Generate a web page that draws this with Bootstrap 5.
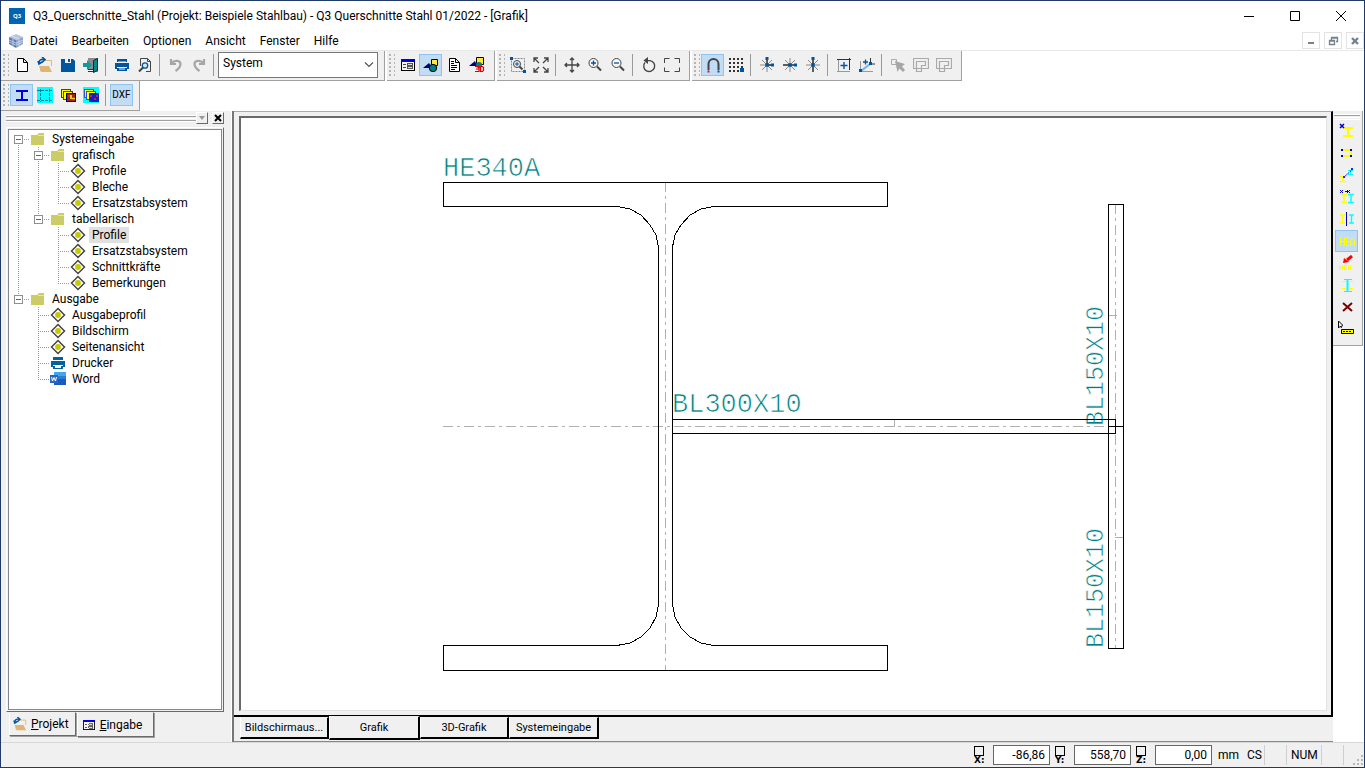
<!DOCTYPE html>
<html lang="de">
<head>
<meta charset="utf-8">
<meta name="viewport" content="width=device-width, initial-scale=1">
<title>Q3_Querschnitte_Stahl</title>
<link href="https://cdn.jsdelivr.net/npm/bootstrap@5.3.0/dist/css/bootstrap.min.css" rel="stylesheet">
<script src="https://cdn.jsdelivr.net/npm/bootstrap@5.3.0/dist/js/bootstrap.bundle.min.js"></script>
<style>
:root{--face:#f0f0f0;--shade:#a0a0a0;--dark:#696969}
body{font:12px/16px Roboto,"Open Sans",sans-serif;color:#000;background:#fff}
button{font:inherit;color:inherit;border:0;background:none;padding:0}
svg{display:block;flex:none}
.window{height:100vh;min-height:480px;border:1px solid #203a68}
.titlebar{height:30px;padding-left:8px}
.titlebar h1{font-size:12px;line-height:16px;font-weight:400;color:#000}
.winbtn{width:46px;height:30px}
.menubar{height:19px;padding-left:8px}
.menubar a{color:#000;text-decoration:none;padding:0 7px}
.mdi{width:18px;height:17px;border:1px solid #e3e3e3}
.bands{border-top:1px solid #e8e8e8;column-gap:2px}
.band{background:var(--face);border-right:1px solid var(--shade);border-bottom:1px solid var(--shade);height:30px;padding:0 6px 2px 9px;position:relative}
.band::before{content:"";position:absolute;left:2px;top:3px;bottom:3px;width:6px;background:radial-gradient(circle at 1px 1px,#b4b4b4 1px,transparent 1px) 0 0/5px 4px}
.tool{width:23px;height:22px}
.tool.active,.side .active{background:#c2dcf3;border:1px solid #8cc4f4}
.dxf{font-size:10px;line-height:20px}
.split{width:1px;height:22px;background:#999;margin:0 4px 0 3px}
.combo{width:160px;height:26px;border:1px solid #777;border-radius:0;font:12px/18px Roboto,sans-serif;color:#000;background:#fff;padding:0 0 3px 4px;appearance:none}
.combo-wrap{position:relative}
.combo-wrap svg{position:absolute;right:4px;top:9px;pointer-events:none}
.main{background:var(--face);min-height:0}
.left{width:231px;padding:1px 7px 5px 5px;border-right:1px solid #fff}
.docktitle{height:12px;margin-bottom:3px}
.rail{height:7px;border:1px solid #fff;border-width:1px 0;background:linear-gradient(var(--shade) 1px,transparent 1px 2px,#fff 2px 3px,transparent 3px 4px,var(--shade) 4px)}
.tiny{width:12px;height:12px;border:1px solid;border-color:#fff var(--dark) var(--dark) #fff}
.treeframe{border:1px solid;border-color:#fff var(--dark) var(--dark) #fff;padding:1px}
.tree{background:#fff;border:1px solid #828790;padding:1px 0 0}
.outline,.outline ul{list-style:none;margin:0;padding:0}
.outline ul{padding-left:20px}
.outline li{--v:repeating-linear-gradient(#999 0 1px,transparent 1px 2px);--h:repeating-linear-gradient(90deg,#999 0 1px,transparent 1px 2px);background:var(--v) 9px 0/1px 100% no-repeat,var(--h) 9px 8px/12px 1px no-repeat}
.outline li:last-child{background:var(--v) 9px 0/1px 8px no-repeat,var(--h) 9px 8px/12px 1px no-repeat}
.outline>li:first-child{background-position:9px 8px,9px 8px}
.node{height:16px}
.node>.fold,.node>.nofold{width:20px;height:16px;padding:0 0 0 5px}
.fold i{display:block;width:9px;height:9px;border:1px solid #8e8f8f;background:linear-gradient(#4b63a7,#4b63a7) 1px 3px/5px 1px no-repeat #fff}
.node svg{margin:0 3px 0 1px}
.node a{color:#000;text-decoration:none;padding:0 3px}
.node a.picked{background:#e0e0e0}
.docktabs{padding-left:3px}
.docktab{height:24px;padding:0 6px 0 3px;border:1px solid;border-color:transparent var(--dark) var(--dark) #fff;box-shadow:1px 1px 0 var(--shade)}
.docktab.lower{height:25px;margin-left:1px;padding:0 11px 0 4px}
.center{border-left:2px solid #777;min-width:0}
.mdiframe{border-right:2px solid #000;border-bottom:2px solid #000;border-top:1px solid #aaa;padding:4px 4px 4px 5px;min-height:0}
.canvas{border:1px solid;border-color:#696969 #e3e3e3 #e3e3e3 #696969;border-width:2px 1px 1px 2px;background:#fff;min-height:0}
.canvas svg{width:100%;height:100%}
.canvas text{font-family:"Liberation Mono",monospace;fill:#008080;stroke:#fff;stroke-width:.7px}
.sheets{height:25px;padding-left:6px;border-bottom:1px solid #888;font-size:11px}
.sheet{height:22px;border:1px solid;border-color:transparent #000 #000 #fff;border-bottom-width:2px;border-right-width:2px}
.sheet.front{height:24px;margin-top:-1px;background:var(--face)}
.right{width:31px;background:#fff}
.side{background:var(--face);width:30px;padding:3px 3px 5px 1px;border:1px solid var(--shade);border-left:0;border-top:0}
.side button{width:23px;height:22px}
.side .rail{width:26px;height:6px}
.status{height:25px;background:var(--face);border-top:1px solid #d8d8d8}
.status label{width:11px;margin:0 8px 0 5px;font:700 9px/8px "DejaVu Sans",sans-serif}
.status label span{display:block;width:10px;height:10px;border:1px solid #000}
.status input{width:57px;height:20px;border:1px solid #666;padding:0 4px 0 0;text-align:right;font:12px/16px Roboto,sans-serif;background:#fff}
.unit{width:21px;margin:0 8px 0 6px}
.cellbox{border-right:1px solid #cfcfcf;height:20px;line-height:20px}
.w-cs{width:18px}.w-gap{width:22px}.w-num{width:35px;padding-left:4px}
.px1{shape-rendering:crispEdges}
</style>
</head>
<body>
<svg width="0" height="0" class="position-absolute" aria-hidden="true">
<defs>
<symbol id="i-new" viewBox="0 0 16 16"><path d="M3.500 1.500h6l4 4v9h-10zM9.500 1.500v4h4" fill="#fff" stroke="#000"/></symbol>
<symbol id="i-open" viewBox="0 0 16 16"><path d="M8 3.500h6.500V9M3.500 9v5" fill="none" stroke="#e2b978"/><path d="M2 9h10l3 6H4z" fill="#e0b574"/><path d="M2 6c0-3 2-4 5-3.500M5 0l3 2.600L5 5.500M1 4l1 3 3-2" fill="none" stroke="#00559f" stroke-width="1.600"/></symbol>
<symbol id="i-save" viewBox="0 0 16 16"><path d="M1 2h12l2 2v11H1z" fill="#00559f"/><path d="M5 2h6v4H5z" fill="#f0f0f0"/><path d="M8 2h2v3H8z" fill="#00559f"/></symbol>
<symbol id="i-exit" viewBox="0 0 16 16"><path d="M5 1h10v14h-4v-2H5z" fill="#8c8c8c"/><path d="M10.500 3.500l4-2v12l-4 2z" fill="#008c8c" stroke="#222"/><path d="M0 6h4V3l5 5-5 5v-3H0z" fill="#129a9a"/><path d="M5 12.500h5M5 14.500h5" stroke="#333"/></symbol>
<symbol id="i-print" viewBox="0 0 16 16"><path d="M3 2h10v3H3zM1 6h14v6h-2v-2H3v2H1zM3 11h10v3H3z" fill="#00559f"/><path d="M5 11.500h6v1H5zM4 4.500h8v1H4z" fill="#f0f0f0"/></symbol>
<symbol id="i-preview" viewBox="0 0 16 16"><path d="M3.500 9V1.500h7l3 3v10H9M10.500 1.500v3h3" fill="none" stroke="#444"/><circle cx="8" cy="8.500" r="2.700" fill="#d8ebfa" stroke="#00559f" stroke-width="1.300"/><path d="M6 10.500L2 14.500" stroke="#444" stroke-width="2"/></symbol>
<symbol id="i-undo" viewBox="0 0 16 16"><path d="M3 2v5h5M3.500 6.500c3-4 9-3 9 .500 0 3-2 5-5 7" fill="none" stroke="#a6a6a6" stroke-width="2.200"/></symbol>
<symbol id="i-form" viewBox="0 0 16 16"><g class="px1"><path d="M1.500 2.500h13v11h-13z" fill="#f4f4f4" stroke="#000"/><path d="M1 2h14v3H1z" fill="#0000e0"/><path d="M3 7.500h3M3 10.500h3" stroke="#444"/><path d="M7.500 6.500h5v2h-5zM7.500 9.500h5v2h-5z" fill="#ddd" stroke="#555"/></g></symbol>
<symbol id="i-shapes" viewBox="0 0 16 16"><path d="M8.500 2.500h6v6h-6z" fill="#ffe83a" stroke="#000"/><path d="M0 11l6-5 3 5z" fill="#000080"/><circle cx="10" cy="11" r="3.700" fill="#008080" stroke="#000"/></symbol>
<symbol id="i-doc" viewBox="0 0 16 16"><path d="M3.500 1.500h6l4 4v9h-10zM9.500 1.500v4h4" fill="#fff" stroke="#000"/><path d="M5 4.500h3M5 6.500h3M5 8.500h6M5 10.500h6M5 12.500h4" stroke="#000"/></symbol>
<symbol id="i-3d" viewBox="0 0 16 16"><path d="M7.500.500h7v7h-7z" fill="#ffe83a" stroke="#000"/><path d="M0 9l6-5 2 5z" fill="#000080"/><circle cx="10" cy="8" r="3" fill="#008080"/><path d="M6 9.500h4v5H6M7 12h3M11.500 9.500h2l1 1v3l-1 1h-2z" fill="none" stroke="#e00000" stroke-width="1.200"/></symbol>
<symbol id="i-zoomwin" viewBox="0 0 16 16"><path d="M1.500 1.500h13v13h-13z" fill="none" stroke="#888" stroke-dasharray="2 1"/><path d="M0 0h3v3H0zM13 13h3v3h-3z" fill="#00559f"/><circle cx="7" cy="7" r="3.500" fill="#f0f0f0" stroke="#444"/><path d="M9.500 9.500l3 3" stroke="#444" stroke-width="2"/><path d="M5 7h4M7 5v4" stroke="#00559f"/></symbol>
<symbol id="i-expand" viewBox="0 0 16 16"><path d="M1 5V1h4M11 1h4v4M15 11v4h-4M5 15H1v-4M1 1l5 5M15 1l-5 5M15 15l-5-5M1 15l5-5" fill="none" stroke="#444" stroke-width="1.300"/></symbol>
<symbol id="i-move" viewBox="0 0 16 16"><path d="M8 1v14M1 8h14M6 3l2-2 2 2M6 13l2 2 2-2M3 6L1 8l2 2M13 6l2 2-2 2" fill="none" stroke="#444" stroke-width="1.300"/></symbol>
<symbol id="i-zin" viewBox="0 0 16 16"><circle cx="6.500" cy="6" r="4.500" fill="#f8f8f8" stroke="#444"/><path d="M10 9.500l4 4" stroke="#444" stroke-width="2"/><path d="M4 6h5M6.500 3.500v5" stroke="#00559f" stroke-width="1.300"/></symbol>
<symbol id="i-zout" viewBox="0 0 16 16"><circle cx="6.500" cy="6" r="4.500" fill="#f8f8f8" stroke="#444"/><path d="M10 9.500l4 4" stroke="#444" stroke-width="2"/><path d="M4 6h5" stroke="#00559f" stroke-width="1.300"/></symbol>
<symbol id="i-rotate" viewBox="0 0 16 16"><path d="M4 5.500A5.500 5.500 0 1 0 9 3.600H5" fill="none" stroke="#444" stroke-width="1.400"/><path d="M7 0v7L2.500 3.500z" fill="#444"/></symbol>
<symbol id="i-full" viewBox="0 0 16 16"><path d="M.500 6V1.500h5M10.500 1.500h5V6M15.500 10.500v4h-5M5.500 14.500h-5v-4" fill="none" stroke="#444"/></symbol>
<symbol id="i-magnet" viewBox="0 0 16 16"><path d="M3.500 13V7a4.500 4.500 0 0 1 10 0v6" fill="none" stroke="#444" stroke-width="2"/><path d="M2.500 13.500h2v2h-2z" fill="#c0105c"/><path d="M12.500 13.500h2v2h-2z" fill="#00559f"/></symbol>
<symbol id="i-grid" viewBox="0 0 16 16"><path d="M1 2h14M1 6h14M1 10h14M1 14h10" stroke="#333" stroke-width="2" stroke-dasharray="2 2" class="px1"/><path d="M12 11h4v4h-4z" fill="#00559f"/></symbol>
<symbol id="i-ray" viewBox="0 0 16 16"><path d="M8 1v14M1 8h14M3 3l10 10M13 3L3 13" stroke="#8a8a8a"/><path d="M6.500 6.500h3v3h-3z" fill="#00559f"/></symbol>
<symbol id="i-plusbox" viewBox="0 0 16 16"><path d="M1 14.500h13M2.500 3v11" stroke="#999"/><path d="M1 2.500h14M13.500 1v12" stroke="#333"/><path d="M8 5v7M4.500 8.500h7" stroke="#00559f" stroke-width="1.400"/></symbol>
<symbol id="i-line" viewBox="0 0 16 16"><path d="M1.500 4v10M2 14.500h12" stroke="#999"/><path d="M2 14L11 7" stroke="#73b4ea" stroke-width="2"/><path d="M11.500 1v6h5" fill="none" stroke="#333"/><path d="M4 5h5M6.500 2.500v5" stroke="#00559f" stroke-width="1.300"/><path d="M0 12h3v3H0zM10 5h3v3h-3z" fill="#00559f"/></symbol>
<symbol id="i-pick" viewBox="0 0 16 16"><path d="M1.500 2.500h5v5h-5z" fill="none" stroke="#aaa"/><path d="M5 4l10 3-3 2.500 3 3.500-2 2-3.500-3.500-2 3.500z" fill="#a6a6a6"/></symbol>
<symbol id="i-screen" viewBox="0 0 16 16"><path d="M.500 1.500h15v10h-7v3h-5v-3h-3zM3.500 4.500h9v4h-4v3h-5z" fill="none" stroke="#aaa" stroke-width="1.200"/></symbol>
<symbol id="i-beam" viewBox="0 0 16 16"><path d="M2 4h12M2 13h12" stroke="#0000e0" stroke-width="2"/><path d="M8 4v9" stroke="#0000e0" stroke-width="2"/></symbol>
<symbol id="i-beam2" viewBox="0 0 16 16"><path d="M0 0h16v16H0z" fill="#0ff"/><path d="M0 3.500h16M0 13.500h16M3.500 2v13M12.500 2v13" stroke="#008098" stroke-dasharray="3 1"/></symbol>
<symbol id="i-cards" viewBox="0 0 16 16"><g class="px1"><path d="M1.500 2.500h9v8h-9z" fill="#ff0" stroke="#443"/><path d="M3.500 4.500h9v8h-9z" fill="#ff0" stroke="#443"/><path d="M6.500 6.500h9v8h-9z" fill="#a02810" stroke="#000080"/><path d="M8 8h2v2H8zM12 10h3v3h-3z" fill="#d33b15"/><path d="M10 8h2v3h3v1h-5z" fill="#e0d020"/></g></symbol>
<symbol id="i-cards2" viewBox="0 0 16 16"><g class="px1"><path d="M0 0h16v16H0z" fill="#0ff"/><path d="M1.500 2.500h9v8h-9z" fill="#ff0" stroke="#35b"/><path d="M3.500 4.500h9v8h-9z" fill="#ff0" stroke="#35b"/><path d="M6 6h10v9H6z" fill="#1020c0"/><path d="M7 8h2v2H7zM11 11h2v2h-2zM13 8h2v2h-2z" fill="#c02060"/></g></symbol>
<symbol id="i-folder" viewBox="0 0 16 16"><path d="M1 4h6l2-2h5v12H1z" fill="#cccc66"/><path d="M8 4.500h6" stroke="#e6e6a8"/></symbol>
<symbol id="i-diamond" viewBox="0 0 16 16"><path d="M8 1.500L14.500 8 8 14.500 1.500 8z" fill="#fff" stroke="#444" stroke-width="1.500"/><circle cx="8" cy="8" r="2.900" fill="#c8c800"/></symbol>
<symbol id="i-printer" viewBox="0 0 16 16"><path d="M3 2h10v3H3zM1 6h14v6h-2v-2H3v2H1zM3 11h10v3H3z" fill="#00639c"/><path d="M5 11h6v2H5z" fill="#fff"/></symbol>
<symbol id="i-word" viewBox="0 0 16 16"><path d="M4 1h12v5H4z" fill="#41a5ee"/><path d="M4 5h12v3H4z" fill="#2b7cd3"/><path d="M4 8h12v6H4z" fill="#185abd"/><path d="M0 4h8v8H0z" fill="#2a66c2"/><path d="M1.500 6l1 4L4 6.500 5.500 10l1-4" fill="none" stroke="#fff"/></symbol>
<symbol id="s1" viewBox="0 0 16 16"><path d="M4 5h10M4 13h10M9 5v8" stroke="#ff0" stroke-width="2"/><path d="M1 1l4 4M5 1L1 5" stroke="#0000c8" stroke-width="1.500"/></symbol>
<symbol id="s2" viewBox="0 0 16 16"><path d="M3 5h9v6H3" fill="none" stroke="#ff0" stroke-width="2"/><path d="M2 4h2v2H2zM11 4h2v2h-2zM2 10h2v2H2zM11 10h2v2h-2z" fill="#0000c8"/></symbol>
<symbol id="s3" viewBox="0 0 16 16"><path d="M1 9.500h6M1 14.500h6M4 9v6" stroke="#ff0" stroke-width="1.500"/><path d="M9 3.500h5M9 7.500h5M11.500 3v5" stroke="#0ff"/><path d="M4 11l10-9" stroke="#0000c8" stroke-dasharray="2 1"/><path d="M4 9h2v2H4zM12 1h2v2h-2z" fill="#22f"/></symbol>
<symbol id="s4" viewBox="0 0 16 16"><path d="M2 5.500h6M2 13.500h6M5 5v9" stroke="#ff0" stroke-width="1.500"/><path d="M9 5.500h6M9 13.500h6M12 5v9" stroke="#0ff" stroke-width="1.500"/><path d="M1 1l3 3M4 1L1 4M6 2.500h4M8 1l3 3M11 1L8 4" fill="none" stroke="#0000c8"/></symbol>
<symbol id="s5" viewBox="0 0 16 16"><path d="M1 4h5M1 12h5M3.500 4v8" stroke="#ff0" stroke-width="1.500"/><path d="M10 4h5M10 12h5M12.500 4v8" stroke="#0ff" stroke-width="1.500"/><path d="M7.500 1v14" stroke="#0000c8"/></symbol>
<symbol id="s6" viewBox="0 0 16 16"><path d="M1.500 4v9M5.500 4v9M1 8.500h4M10.500 4.500h-3v8h3M7 8.500h3M11.500 13V8l2-4 2 4v5M12 10.500h3" fill="none" stroke="#ff0"/></symbol>
<symbol id="s7" viewBox="0 0 16 16"><path d="M.500 10v5M3.500 10v5M1 12.500h3M8 10.500H5.500v4H8M6 12.500h2M9.500 15v-4h2v4M10 13h2" fill="none" stroke="#ff0" stroke-width="1.200"/><path d="M13 1L8 5" stroke="red" stroke-width="3"/><path d="M4 8l1-5 5 4z" fill="red"/></symbol>
<symbol id="s8" viewBox="0 0 16 16"><path d="M5 2.500h8M5 14.500h8" stroke="#0ff"/><path d="M8.500 2v13" stroke="#0ff" stroke-width="2"/><path d="M3 4.500h4M11 4.500h3M3 11.500h4M11 11.500h3" stroke="#ff0"/></symbol>
<symbol id="s9" viewBox="0 0 16 16"><path d="M4 4l9 8M13 4l-9 8" stroke="#7b0000" stroke-width="2"/></symbol>
<symbol id="s10" viewBox="0 0 20 18"><path d="M1.500 1v7l2-2 1 2M1.500 1l4 4-1 2" fill="none" stroke="#000"/><path d="M4.500 9.500h12v4h-12z" fill="#ff0" stroke="#000"/><path d="M6 11.500h9" stroke="#000" stroke-dasharray="2 1"/></symbol>
</defs>
</svg>

<div class="window d-flex flex-column overflow-hidden">
  <header class="titlebar d-flex align-items-center">
    <svg width="16" height="16" viewBox="0 0 16 16"><path d="M0 0h16v16H0z" fill="#0065b0"/><text x="8" y="10" text-anchor="middle" font-family="Open Sans" font-size="6" font-weight="700" fill="#fff">Q3</text></svg>
    <h1 class="m-0 ps-1 ms-1 flex-grow-1 text-truncate">Q3_Querschnitte_Stahl (Projekt: Beispiele Stahlbau) - Q3 Querschnitte Stahl 01/2022 - [Grafik]</h1>
    <button class="winbtn d-flex justify-content-center align-items-center" aria-label="Minimieren"><svg width="10" height="10"><path d="M0 5.500h10" stroke="#000"/></svg></button>
    <button class="winbtn d-flex justify-content-center align-items-center" aria-label="Maximieren"><svg width="10" height="10"><path d="M.500.500h9v9h-9z" fill="none" stroke="#000"/></svg></button>
    <button class="winbtn d-flex justify-content-center align-items-center" aria-label="Schließen"><svg width="10" height="10"><path d="M0 0l10 10M10 0L0 10" stroke="#000"/></svg></button>
  </header>
  <nav class="menubar d-flex align-items-center">
    <svg width="14" height="14" viewBox="0 0 14 14"><path d="M0 3l7-3 7 3-7 3z" fill="#b9c6dd"/><path d="M0 3l7 3v8l-7-4z" fill="#5c7db1"/><path d="M14 3L7 6v8l7-4z" fill="#8ba3ca"/><path d="M0 6l7 3 7-3M0 8l7 3 7-3M3 2l7 3M4 5v7M10 5v7" fill="none" stroke="#dde5f2" stroke-width=".700"/></svg>
    <a href="#">Datei</a><a href="#">Bearbeiten</a><a href="#">Optionen</a><a href="#">Ansicht</a><a href="#">Fenster</a><a href="#">Hilfe</a>
    <div class="ms-auto d-flex">
      <button class="mdi" aria-label="Fenster minimieren"><svg width="16" height="15"><path d="M5 10h6" stroke="#74828f" stroke-width="2"/></svg></button>
      <button class="mdi mx-1" aria-label="Fenster wiederherstellen"><svg width="16" height="15"><path d="M6.500 7V4.500h6v4H11M4.500 7.500h5v4h-5zM6 5h6M4 8h6" fill="none" stroke="#74828f" stroke-width="1.300"/></svg></button>
      <button class="mdi" aria-label="Fenster schließen"><svg width="16" height="15"><path d="M5 5l6 6M11 5l-6 6" stroke="#74828f" stroke-width="2.400"/></svg></button>
    </div>
  </nav>
  <div class="bands d-flex flex-wrap">
    <div class="band d-flex align-items-center">
      <button class="tool" data-i="i-new" aria-label="Neu"></button>
      <button class="tool" data-i="i-open" aria-label="Öffnen"></button>
      <button class="tool" data-i="i-save" aria-label="Speichern"></button>
      <button class="tool" data-i="i-exit" aria-label="Beenden"></button>
      <div class="split"></div>
      <button class="tool" data-i="i-print" aria-label="Drucken"></button>
      <button class="tool" data-i="i-preview" aria-label="Vorschau"></button>
      <div class="split"></div>
      <button class="tool" data-i="i-undo" aria-label="Rückgängig"></button>
      <button class="tool" data-i="i-undo" data-flip="1" aria-label="Wiederholen"></button>
      <div class="split"></div>
      <div class="combo-wrap"><select class="combo" aria-label="System"><option>System</option></select><svg width="10" height="8"><path d="M1 1.500l4 4 4-4" fill="none" stroke="#555" stroke-width="1.200"/></svg></div>
    </div>
    <div class="band d-flex align-items-center">
      <button class="tool" data-i="i-form" aria-label="Tabelle"></button>
      <button class="tool active" data-i="i-shapes" aria-label="Grafik"></button>
      <button class="tool" data-i="i-doc" aria-label="Text"></button>
      <button class="tool" data-i="i-3d" aria-label="3D"></button>
    </div>
    <div class="band d-flex align-items-center">
      <button class="tool" data-i="i-zoomwin" aria-label="Zoom Fenster"></button>
      <button class="tool" data-i="i-expand" aria-label="Zoom alles"></button>
      <div class="split"></div>
      <button class="tool" data-i="i-move" aria-label="Verschieben"></button>
      <button class="tool" data-i="i-zin" aria-label="Vergrößern"></button>
      <button class="tool" data-i="i-zout" aria-label="Verkleinern"></button>
      <div class="split"></div>
      <button class="tool" data-i="i-rotate" aria-label="Drehen"></button>
      <button class="tool" data-i="i-full" aria-label="Vollbild"></button>
    </div>
    <div class="band d-flex align-items-center">
      <button class="tool active" data-i="i-magnet" aria-label="Fang"></button>
      <button class="tool" data-i="i-grid" aria-label="Raster"></button>
      <div class="split"></div>
      <button class="tool" data-i="i-ray" data-m="M8 1v7h6" aria-label="Orthogonal"></button>
      <button class="tool" data-i="i-ray" data-m="M1 8h13" aria-label="Horizontal"></button>
      <button class="tool" data-i="i-ray" data-m="M8 2v13" aria-label="Vertikal"></button>
      <div class="split"></div>
      <button class="tool" data-i="i-plusbox" aria-label="Absolut"></button>
      <button class="tool" data-i="i-line" aria-label="Relativ"></button>
      <div class="split"></div>
      <button class="tool" data-i="i-pick" aria-label="Auswahl"></button>
      <button class="tool" data-i="i-screen" aria-label="Ansicht 1"></button>
      <button class="tool" data-i="i-screen" aria-label="Ansicht 2"></button>
    </div>
  </div>
  <div class="d-flex">
    <div class="band d-flex align-items-center">
      <button class="tool active" data-i="i-beam" aria-label="Profil"></button>
      <button class="tool" data-i="i-beam2" aria-label="Profile"></button>
      <button class="tool" data-i="i-cards" aria-label="Bleche"></button>
      <button class="tool" data-i="i-cards2" aria-label="Alle Bleche"></button>
      <div class="split"></div>
      <button class="tool active dxf">DXF</button>
    </div>
  </div>

  <div class="main d-flex flex-grow-1">
    <aside class="left d-flex flex-column flex-shrink-0">
      <div class="docktitle d-flex align-items-center">
        <div class="rail flex-grow-1"></div>
        <button class="tiny" aria-label="Menü"><svg width="10" height="10"><path d="M2 3h6L5 7z" fill="#999"/></svg></button>
        <button class="tiny ms-1" aria-label="Schließen"><svg width="10" height="10"><path d="M2 2l6 6M8 2L2 8" stroke="#000" stroke-width="2"/></svg></button>
      </div>
      <div class="treeframe flex-grow-1 d-flex flex-column"><div class="tree flex-grow-1">
        <ul class="outline">
          <li><div class="node d-flex"><button class="fold" aria-label="Einklappen"><i></i></button><svg width="16" height="16"><use href="#i-folder"/></svg><a href="#">Systemeingabe</a></div>
            <ul>
              <li><div class="node d-flex"><button class="fold" aria-label="Einklappen"><i></i></button><svg width="16" height="16"><use href="#i-folder"/></svg><a href="#">grafisch</a></div>
                <ul>
                  <li><div class="node d-flex"><span class="nofold"></span><svg width="16" height="16"><use href="#i-diamond"/></svg><a href="#">Profile</a></div></li>
                  <li><div class="node d-flex"><span class="nofold"></span><svg width="16" height="16"><use href="#i-diamond"/></svg><a href="#">Bleche</a></div></li>
                  <li><div class="node d-flex"><span class="nofold"></span><svg width="16" height="16"><use href="#i-diamond"/></svg><a href="#">Ersatzstabsystem</a></div></li>
                </ul></li>
              <li><div class="node d-flex"><button class="fold" aria-label="Einklappen"><i></i></button><svg width="16" height="16"><use href="#i-folder"/></svg><a href="#">tabellarisch</a></div>
                <ul>
                  <li><div class="node d-flex"><span class="nofold"></span><svg width="16" height="16"><use href="#i-diamond"/></svg><a href="#" class="picked">Profile</a></div></li>
                  <li><div class="node d-flex"><span class="nofold"></span><svg width="16" height="16"><use href="#i-diamond"/></svg><a href="#">Ersatzstabsystem</a></div></li>
                  <li><div class="node d-flex"><span class="nofold"></span><svg width="16" height="16"><use href="#i-diamond"/></svg><a href="#">Schnittkräfte</a></div></li>
                  <li><div class="node d-flex"><span class="nofold"></span><svg width="16" height="16"><use href="#i-diamond"/></svg><a href="#">Bemerkungen</a></div></li>
                </ul></li>
            </ul></li>
          <li><div class="node d-flex"><button class="fold" aria-label="Einklappen"><i></i></button><svg width="16" height="16"><use href="#i-folder"/></svg><a href="#">Ausgabe</a></div>
            <ul>
              <li><div class="node d-flex"><span class="nofold"></span><svg width="16" height="16"><use href="#i-diamond"/></svg><a href="#">Ausgabeprofil</a></div></li>
              <li><div class="node d-flex"><span class="nofold"></span><svg width="16" height="16"><use href="#i-diamond"/></svg><a href="#">Bildschirm</a></div></li>
              <li><div class="node d-flex"><span class="nofold"></span><svg width="16" height="16"><use href="#i-diamond"/></svg><a href="#">Seitenansicht</a></div></li>
              <li><div class="node d-flex"><span class="nofold"></span><svg width="16" height="16"><use href="#i-printer"/></svg><a href="#">Drucker</a></div></li>
              <li><div class="node d-flex"><span class="nofold"></span><svg width="16" height="16"><use href="#i-word"/></svg><a href="#">Word</a></div></li>
            </ul></li>
        </ul>
      </div></div>
      <div class="docktabs d-flex align-items-start">
        <button class="docktab d-flex align-items-center gap-1"><svg width="14" height="14"><use href="#i-open"/></svg><span><u>P</u>rojekt</span></button>
        <button class="docktab lower d-flex align-items-center gap-1"><svg width="14" height="14"><use href="#i-form"/></svg><span><u>E</u>ingabe</span></button>
      </div>
    </aside>

    <main class="center flex-grow-1 d-flex flex-column">
      <div class="mdiframe flex-grow-1 d-flex"><div class="canvas flex-grow-1">
        <svg viewBox="241 119 1085 590" preserveAspectRatio="xMinYMin meet" role="img" aria-label="Querschnitt">
          <g class="px1" fill="none" stroke="#b0b0b0" stroke-dasharray="10 4 3 4">
            <path d="M443 427.500H1115M665.500 183V671M1115.500 205V649"/>
          </g>
          <path class="px1" d="M894.500 420v8M1108 316.500h9M1115 538.500h8" stroke="#b0b0b0"/>
          <text x="443" y="177" font-size="27">HE340A</text>
          <text x="672" y="413" font-size="27">BL300X10</text>
          <text transform="translate(1103 427) rotate(-90)" font-size="25">BL150X10</text>
          <text transform="translate(1103 649) rotate(-90)" font-size="25">BL150X10</text>
          <g class="px1" fill="none" stroke="#000">
            <path d="M443.500 183.500H887.500V207.500H714L701 210 690 216 681 226 675 236 672.500 248V606L675 618 681 629 690 638 701 644 714 646.500H887.500V671.500H443.500V646.500H617L630 644 641 638 650 629 656 618 658.500 606V248L656 236 650 226 641 216 630 210 617 207.500H443.500Z"/>
            <path d="M672.500 420.500H1115.500V434.500H672.500ZM1108.500 205.500H1123.500V649.500H1108.500ZM1108 427.500H1123.500"/>
          </g>
        </svg>
      </div></div>
      <div class="sheets d-flex align-items-start">
        <button class="sheet" style="width:89px">Bildschirmaus...</button>
        <button class="sheet front" style="width:91px">Grafik</button>
        <button class="sheet" style="width:89px">3D-Grafik</button>
        <button class="sheet" style="width:90px">Systemeingabe</button>
      </div>
    </main>

    <aside class="right flex-shrink-0">
      <div class="side d-flex flex-column align-items-center">
        <div class="rail"></div>
        <button data-i="s1" aria-label="Profil setzen"></button>
        <button data-i="s2" aria-label="Blech setzen"></button>
        <button data-i="s3" aria-label="Verschieben"></button>
        <button data-i="s4" aria-label="Kopieren"></button>
        <button data-i="s5" aria-label="Spiegeln"></button>
        <button data-i="s6" class="active" aria-label="Bezeichnung"></button>
        <button data-i="s7" aria-label="Bezeichnung schieben"></button>
        <button data-i="s8" aria-label="Achsen"></button>
        <button data-i="s9" aria-label="Löschen"></button>
        <button data-i="s10" aria-label="Eigenschaften"></button>
      </div>
    </aside>
  </div>

  <footer class="status d-flex align-items-center justify-content-end flex-shrink-0">
    <label for="px"><span></span>X:</label><input id="px" value="-86,86">
    <label for="py"><span></span>Y:</label><input id="py" value="558,70">
    <label for="pz"><span></span>Z:</label><input id="pz" value="0,00">
    <span class="unit">mm</span>
    <span class="cellbox w-cs">CS</span><span class="cellbox w-gap"></span>
    <span class="cellbox w-num">NUM</span><span class="cellbox w-gap"></span>
    <svg width="20" height="20"><path d="M17 10h2v2h-2zM13 14h2v2h-2zM17 14h2v2h-2zM9 18h2v2H9zM13 18h2v2h-2zM17 18h2v2h-2z" fill="#b8b8b8"/></svg>
  </footer>
</div>
<script>
document.querySelectorAll('button[data-i]').forEach(function (b) {
  var d = b.dataset;
  b.classList.add('d-flex', 'align-items-center', 'justify-content-center');
  var w = d.i === 's10' ? 20 : 16, h = d.i === 's10' ? 18 : 16;
  b.innerHTML = '<svg width="' + w + '" height="' + h + '" viewBox="0 0 ' + w + ' ' + h + '"><use href="#' + d.i + '"' +
    (d.flip ? ' transform="translate(16 0) scale(-1 1)"' : '') + '/>' +
    (d.m ? '<path d="' + d.m + '" fill="none" stroke="#333" stroke-width="1.400"/><path d="' +
      (d.m === 'M1 8h13' ? 'M12 6.500h3v3h-3z' : d.m === 'M8 2v13' ? 'M6.500 0h3v3h-3z' : 'M6.500 0h3v3h-3zM12 6.500h3v3h-3z') +
      'M6.500 6.500h3v3h-3z" fill="#00559f"/>' : '') + '</svg>';
});
</script>
</body>
</html>
